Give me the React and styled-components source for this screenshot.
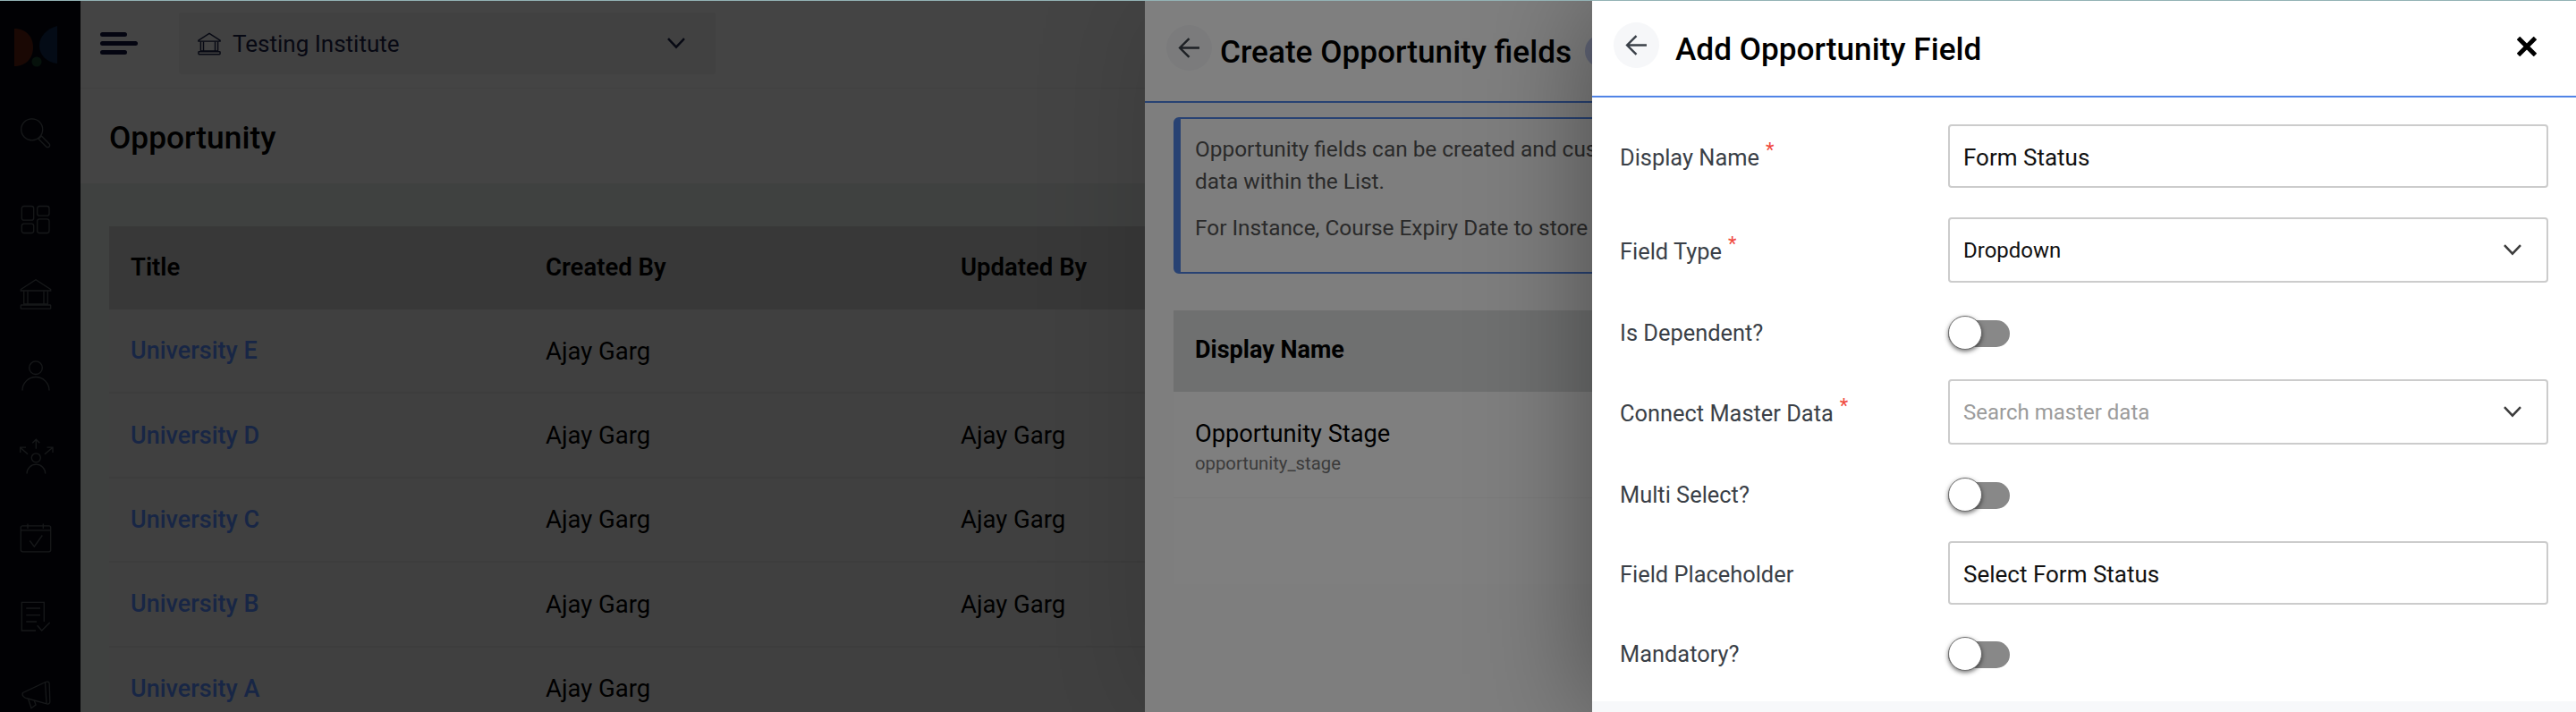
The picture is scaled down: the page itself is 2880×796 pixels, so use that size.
import React from 'react';
import styled, { createGlobalStyle } from 'styled-components';

const GlobalStyle = createGlobalStyle`
  html, body {
    margin: 0;
    padding: 0;
    background: #fff;
    font-family: Roboto, "Liberation Sans", sans-serif;
  }
  * { box-sizing: border-box; }
`;

const Page = styled.div`
  position: relative;
  display: flex;
  width: 2880px;
  height: 796px;
  overflow: hidden;
  background: #ebf1ee;
`;

const TopLine = styled.div`
  position: absolute;
  top: 0;
  left: 0;
  right: 0;
  height: 1px;
  background: #93b3b5;
  z-index: 10;
`;

const Sidebar = styled.aside`
  flex: 0 0 90px;
  background: #040712;
  display: flex;
  flex-direction: column;
  align-items: flex-start;
`;

const LogoCell = styled.div`
  height: 99px;
  padding: 29px 0 0 16px;
`;

const NavIcon = styled.svg`
  display: block;
  flex: none;
  width: 36px;
  height: 36px;
  margin: ${p => p.$top}px 0 0 22px;
  overflow: visible;
  fill: none;
  stroke: #565b60;
  stroke-width: 1.3;
`;

const Main = styled.main`
  flex: 1;
  min-width: 0;
  display: flex;
  flex-direction: column;
`;

const TopBar = styled.header`
  height: 99px;
  flex: none;
  display: flex;
  align-items: center;
  padding: 0 0 0 22px;
  background: #fbfbfb;
  border-bottom: 1px solid #f0f0f0;
`;

const Burger = styled.div`
  width: 42px;
  display: flex;
  flex-direction: column;
  gap: 5.3px;
  margin-top: -1px;
`;

const BurgerBar = styled.span`
  display: block;
  height: 4.7px;
  width: ${p => p.$w}px;
  border-radius: 3px;
  background: #0f1340;
`;

const InstituteSelect = styled.div`
  width: 600px;
  height: 69px;
  margin: -1px 0 0 46px;
  padding: 0 34px 0 21px;
  display: flex;
  align-items: center;
  background: #f1f1f1;
  border-radius: 3px;
  color: #1c2348;
  font-size: 26px;
`;

const InstituteName = styled.span`
  flex: 1;
  margin-left: 13px;
`;

const PageHead = styled.div`
  height: 106px;
  flex: none;
  display: flex;
  align-items: center;
  padding: 3px 0 0 32px;
  background: #fbfbfb;
`;

const PageTitle = styled.h1`
  margin: 0;
  font-size: 35.3px;
  font-weight: 500;
  color: #000;
`;

const TableWrap = styled.div`
  padding: 48px 0 0 32px;
`;

const BaseRow = styled.div`
  display: grid;
  grid-template-columns: 464px 464px 1fr;
  align-items: center;
  height: ${p => (p.$head ? '93px' : '94.4px')};
  padding: ${p => (p.$head ? '0 0 3px 24px' : '0 0 0 24px')};
  font-size: 27.5px;
  font-weight: ${p => (p.$head ? 600 : 400)};
  color: #000;
  background: ${p => (p.$head ? '#cfcfcf' : '#eeeeee')};
  border-bottom: ${p => (p.$head ? 'none' : '2px solid #e2e2e2')};
`;

const BaseLink = styled.span`
  color: #5a8fff;
  font-size: 27px;
  font-weight: 500;
`;

const Overlay = styled.div`
  position: absolute;
  inset: 0;
  background: rgba(0, 0, 0, ${p => p.$alpha});
`;

const Drawer = styled.section`
  position: absolute;
  top: 0;
  bottom: 0;
  right: 0;
  left: ${p => p.$left}px;
  display: flex;
  flex-direction: column;
  background: ${p => p.$bg};
  box-shadow: 0 0 120px rgba(0, 0, 0, ${p => p.$shadow});
`;

const DrawerHead = styled.header`
  height: ${p => p.$h}px;
  flex: none;
  display: flex;
  align-items: center;
  padding-left: 24px;
  background: #fff;
  border-bottom: 2px solid #5184e6;
`;

const BackButton = styled.button`
  width: 51px;
  height: 51px;
  flex: none;
  margin-top: -7px;
  padding: 0;
  display: flex;
  align-items: center;
  justify-content: center;
  border: 0;
  border-radius: 50%;
  background: #f6f7f9;
  color: #3a4048;
`;

const DrawerTitle = styled.h2`
  margin: 3px 0 0 ${p => p.$gap}px;
  font-size: 35.2px;
  font-weight: 500;
  color: #000;
  white-space: nowrap;
`;

const Badge = styled.span`
  flex: none;
  width: 60px;
  height: 36px;
  margin: 0 0 0 15px;
  border-radius: 18px;
  background: #c4cdf0;
`;

const Notice = styled.div`
  height: 175px;
  margin: 16px 0 0 32px;
  padding: 16px 24px 0 16px;
  border: 2px solid #5184e6;
  border-left-width: 8px;
  border-radius: 6px;
  color: #555;
  font-size: 24.4px;
  line-height: 36px;
`;

const NoticeLine = styled.p`
  margin: ${p => p.$top || 0}px 0 0;
  white-space: nowrap;
`;

const FieldsTable = styled.div`
  margin: 41px 0 0 32px;
  background: #fff;
`;

const FieldsHead = styled.div`
  height: 91px;
  display: flex;
  align-items: center;
  padding: 0 0 3px 24px;
  background: #dfe0e1;
  font-size: 27px;
  font-weight: 700;
  color: #000;
`;

const FieldsRow = styled.div`
  height: ${p => p.$h}px;
  padding: 29px 0 0 24px;
  border-bottom: ${p => (p.$line ? '1px solid #f6f6f6' : 'none')};
`;

const FieldName = styled.div`
  font-size: 27.2px;
  line-height: 36px;
  color: #000;
`;

const FieldKey = styled.div`
  margin-top: 1px;
  font-size: 20.3px;
  line-height: 28px;
  color: #777;
`;

const Form = styled.form`
  flex: 1;
  padding: 30px 31px 0 31px;
  display: flex;
  flex-direction: column;
  background: #fff;
`;

const FormRow = styled.div`
  display: grid;
  grid-template-columns: 367px 1fr;
  align-items: center;
  height: ${p => p.$h}px;
  margin-bottom: ${p => p.$mb}px;
`;

const Label = styled.label`
  padding-top: ${p => (p.$toggle ? 0 : 2)}px;
  margin-top: ${p => (p.$toggle ? -2 : 0)}px;
  font-size: 25.4px;
  color: #3a3f47;
`;

const Required = styled.sup`
  margin-left: 7px;
  font-size: 22px;
  line-height: 0;
  color: #f04a3e;
`;

const Field = styled.div`
  height: 100%;
  display: flex;
  align-items: center;
  justify-content: space-between;
  padding: ${p => (p.$select ? '0 28px 0 15px' : '2px 28px 0 15px')};
  border: 2px solid #ccc;
  border-radius: 4px;
  background: #fff;
  color: ${p => (p.$muted ? '#9b9b9b' : '#111')};
  font-size: ${p => (p.$select ? '24px' : '26px')};
`;

const Toggle = styled.div`
  position: relative;
  width: 69px;
  height: 30px;
  border-radius: 15px;
  background: #888;
`;

const Knob = styled.span`
  position: absolute;
  left: 0;
  top: -5px;
  width: 38px;
  height: 38px;
  border: 1px solid #6f6f6f;
  border-radius: 50%;
  background: #fff;
  box-shadow: 0 2px 5px rgba(0, 0, 0, 0.55);
`;

const FormFooter = styled.footer`
  flex: none;
  height: 12px;
  background: #f7f8fa;
`;

const CloseButton = styled.button`
  margin: -4px 44px 0 auto;
  padding: 0;
  display: flex;
  border: 0;
  background: none;
  color: #000;
`;

const ArrowLeft = ({ size = 25 }) => (
  <svg width={size} height={size} viewBox="0 0 24 24" fill="none" stroke="currentColor" strokeWidth="2.3">
    <path d="M23 12H2M12 2 2 12l10 10" />
  </svg>
);

const Chevron = ({ width = 20, color = '#3b3b3b' }) => (
  <svg width={width} height={width * 0.62} viewBox="0 0 20 12.4" fill="none" stroke={color} strokeWidth="2.5">
    <path d="M1 1.2 10 10.6 19 1.2" />
  </svg>
);

const BankLines = () => (
  <>
    <path d="M18 1.8 1.3 12.5v1.5h33.4v-1.5Z" />
    <path d="M4.7 14.5V29H9V14.5M27 14.5V29h4.3V14.5M9 29h18" />
    <rect x="1.3" y="30" width="33.4" height="4.2" rx="0.8" />
  </>
);

const SmallBank = styled.svg`
  flex: none;
  width: 26px;
  height: 26px;
  fill: none;
  stroke: #1c2348;
  stroke-width: 2;
`;

const navIcons = [
  {
    top: 32,
    body: (
      <>
        <circle cx="13.7" cy="13.8" r="12" />
        <path d="M21 24.3 24.3 21 33 29.7a2.3 2.3 0 0 1-3.3 3.3Z" />
      </>
    ),
  },
  {
    top: 61,
    body: (
      <>
        <rect x="2.3" y="2.5" width="13.4" height="15.7" rx="2.5" />
        <rect x="19.7" y="2.5" width="13.3" height="10.7" rx="2.5" />
        <rect x="2.3" y="22.2" width="13.4" height="10.3" rx="2.5" />
        <rect x="19.7" y="16.8" width="13.3" height="15.7" rx="2.5" />
      </>
    ),
  },
  { top: 47, body: <BankLines /> },
  {
    top: 55,
    body: (
      <>
        <circle cx="18" cy="9.2" r="7.3" />
        <path d="M3 34.5a15 15 0 0 1 30 0" />
      </>
    ),
  },
  {
    top: 54,
    body: (
      <>
        <circle cx="18.3" cy="19.8" r="5" />
        <path d="M8 37.5a10.3 10.3 0 0 1 20.7 0" />
        <path d="M18.3 9.8V-.8M14.3 3.2l4-4 4 4" />
        <path d="M9 15.8.7 8.2M.7 14V8.2H7" />
        <path d="M28 15.8 37 8.2M30.5 8.2H37V14" />
      </>
    ),
  },
  {
    top: 55.5,
    body: (
      <>
        <rect x="1.3" y="3.8" width="33.4" height="29" rx="2" />
        <path d="M9 1.5V7M26.3 1.5V7M1.3 8.8h33.4" />
        <path d="M11.3 20.5l5 6.7 9-12.7" />
      </>
    ),
  },
  {
    top: 51,
    body: (
      <>
        <path d="M18 34H2.3V2.3h25V24" />
        <path d="M7.3 9H23M7.3 16.7H23M7.3 24H19" />
        <path d="M19.7 28.3l5 5.7 9-9" />
      </>
    ),
  },
  {
    top: 52,
    body: (
      <>
        <path d="M3.5 15.5 29 3.5c2.5-1 4 0 4.2 2l.6 20c0 2-1.5 3-3.5 2.3L9 22c-4-.5-7-3.5-5.5-6.5Z" />
        <path d="M28.5 4 30 27.5" />
        <path d="M9.7 22.7 13 32.7l5-3.7-1.7-5" />
      </>
    ),
  },
];

const baseRows = [
  ['University E', 'Ajay Garg', ''],
  ['University D', 'Ajay Garg', 'Ajay Garg'],
  ['University C', 'Ajay Garg', 'Ajay Garg'],
  ['University B', 'Ajay Garg', 'Ajay Garg'],
  ['University A', 'Ajay Garg', ''],
];

const Star = () => <Required>*</Required>;

const Switch = () => (
  <Toggle>
    <Knob />
  </Toggle>
);

const App = () => (
  <Page>
    <GlobalStyle />
    <Sidebar>
      <LogoCell>
        <svg width="50" height="48" viewBox="0 0 50 48">
          <path d="M0 3c14 0 21 10 21 21S14 45 0 45Z" fill="#60200f" />
          <path d="M48 0C36 3 28 12 28 22s8 19 20 20Z" fill="#0f2a52" />
          <circle cx="25" cy="40" r="5.5" fill="#17402a" />
        </svg>
      </LogoCell>
      {navIcons.map((icon, i) => (
        <NavIcon key={i} viewBox="0 0 36 36" $top={icon.top}>
          {icon.body}
        </NavIcon>
      ))}
    </Sidebar>

    <Main>
      <TopBar>
        <Burger>
          <BurgerBar $w={30} />
          <BurgerBar $w={42} />
          <BurgerBar $w={30} />
        </Burger>
        <InstituteSelect>
          <SmallBank viewBox="0 0 36 36">
            <BankLines />
          </SmallBank>
          <InstituteName>Testing Institute</InstituteName>
          <Chevron color="#1c2348" />
        </InstituteSelect>
      </TopBar>
      <PageHead>
        <PageTitle>Opportunity</PageTitle>
      </PageHead>
      <TableWrap>
        <BaseRow $head>
          <span>Title</span>
          <span>Created By</span>
          <span>Updated By</span>
        </BaseRow>
        {baseRows.map(row => (
          <BaseRow key={row[0]}>
            <BaseLink>{row[0]}</BaseLink>
            <span>{row[1]}</span>
            <span>{row[2]}</span>
          </BaseRow>
        ))}
      </TableWrap>
    </Main>

    <Overlay $alpha={0.46} />

    <Drawer $left={1280} $bg="#fdfdfd" $shadow={0.15}>
      <DrawerHead $h={115}>
        <BackButton type="button">
          <ArrowLeft />
        </BackButton>
        <DrawerTitle $gap={9}>Create Opportunity fields</DrawerTitle>
        <Badge />
      </DrawerHead>
      <Notice>
        <NoticeLine>Opportunity fields can be created and customized to store additional</NoticeLine>
        <NoticeLine>data within the List.</NoticeLine>
        <NoticeLine $top={16}>For Instance, Course Expiry Date to store a date</NoticeLine>
      </Notice>
      <FieldsTable>
        <FieldsHead>Display Name</FieldsHead>
        <FieldsRow $h={119} $line>
          <FieldName>Opportunity Stage</FieldName>
          <FieldKey>opportunity_stage</FieldKey>
        </FieldsRow>
        <FieldsRow $h={96} />
      </FieldsTable>
    </Drawer>

    <Overlay $alpha={0.5} />

    <Drawer $left={1780} $bg="#fff" $shadow={0.4}>
      <DrawerHead $h={109}>
        <BackButton type="button">
          <ArrowLeft />
        </BackButton>
        <DrawerTitle $gap={18}>Add Opportunity Field</DrawerTitle>
        <CloseButton type="button">
          <svg width="22" height="22" viewBox="0 0 22 22" fill="none" stroke="currentColor" strokeWidth="5">
            <path d="M1.5 1.5l19 19M20.5 1.5l-19 19" />
          </svg>
        </CloseButton>
      </DrawerHead>
      <Form>
        <FormRow $h={71} $mb={33}>
          <Label>Display Name<Star /></Label>
          <Field>Form Status</Field>
        </FormRow>
        <FormRow $h={73} $mb={37}>
          <Label>Field Type<Star /></Label>
          <Field $select>
            Dropdown
            <Chevron />
          </Field>
        </FormRow>
        <FormRow $h={39} $mb={32}>
          <Label $toggle>Is Dependent?</Label>
          <Switch />
        </FormRow>
        <FormRow $h={73} $mb={37}>
          <Label>Connect Master Data<Star /></Label>
          <Field $select $muted>
            Search master data
            <Chevron />
          </Field>
        </FormRow>
        <FormRow $h={39} $mb={32}>
          <Label $toggle>Multi Select?</Label>
          <Switch />
        </FormRow>
        <FormRow $h={71} $mb={36}>
          <Label>Field Placeholder</Label>
          <Field>Select Form Status</Field>
        </FormRow>
        <FormRow $h={39} $mb={0}>
          <Label $toggle>Mandatory?</Label>
          <Switch />
        </FormRow>
      </Form>
      <FormFooter />
    </Drawer>

    <TopLine />
  </Page>
);

export default App;
